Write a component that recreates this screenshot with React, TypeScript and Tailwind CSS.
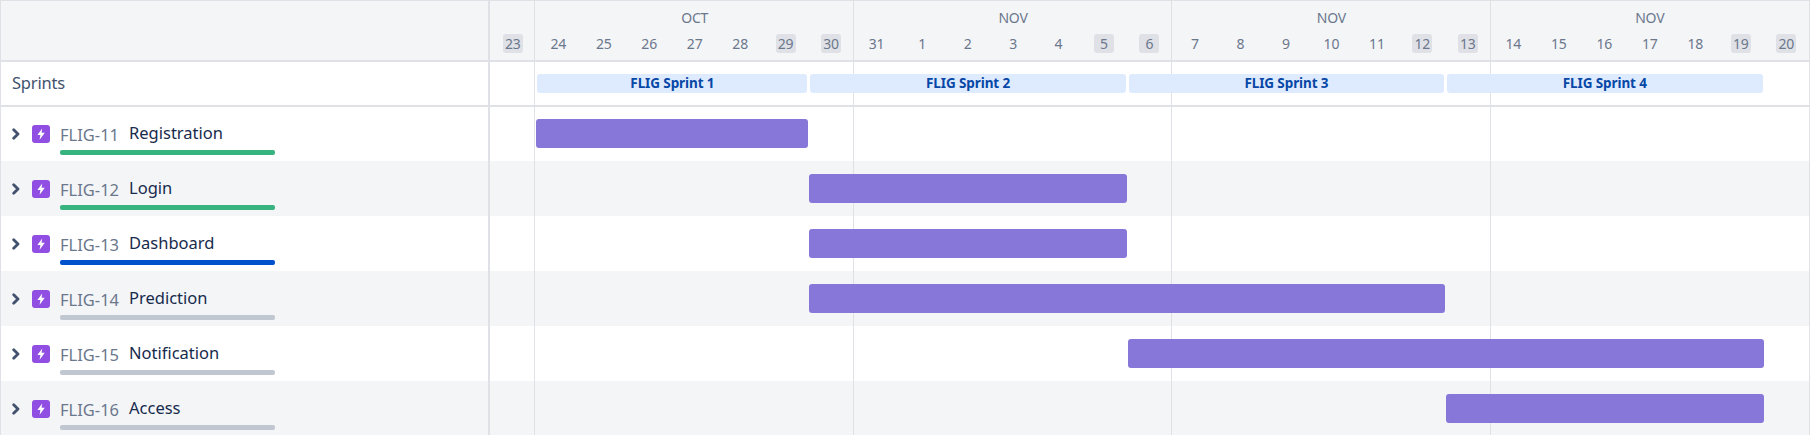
import React from "react";

const days = [23, 24, 25, 26, 27, 28, 29, 30, 31, 1, 2, 3, 4, 5, 6, 7, 8, 9, 10, 11, 12, 13, 14, 15, 16, 17, 18, 19, 20];
const weekends = [23, 29, 30, 5, 6, 12, 13, 19, 20];

const sprints = [
  { name: "FLIG Sprint 1", cls: "col-start-2 col-span-6 ml-[2px] mr-[1px]" },
  { name: "FLIG Sprint 2", cls: "col-start-8 col-span-7 ml-[2px] mr-[1px]" },
  { name: "FLIG Sprint 3", cls: "col-start-15 col-span-7 ml-[2px] mr-[1px]" },
  { name: "FLIG Sprint 4", cls: "col-start-22 col-span-7 ml-[2px] mr-[1px]" },
];

const issues = [
  { id: "FLIG-11", title: "Registration", progress: "bg-[#36b37e]", bar: "col-start-2 col-span-6" },
  { id: "FLIG-12", title: "Login", progress: "bg-[#36b37e]", bar: "col-start-8 col-span-7" },
  { id: "FLIG-13", title: "Dashboard", progress: "bg-[#0052cc]", bar: "col-start-8 col-span-7" },
  { id: "FLIG-14", title: "Prediction", progress: "bg-[#c1c7d0]", bar: "col-start-8 col-span-14" },
  { id: "FLIG-15", title: "Notification", progress: "bg-[#c1c7d0]", bar: "col-start-15 col-span-14" },
  { id: "FLIG-16", title: "Access", progress: "bg-[#c1c7d0]", bar: "col-start-22 col-span-7" },
];

const EpicIcon = () => (
  <div className="w-[18px] h-[18px] rounded-[3px] bg-[#904ee2] flex items-center justify-center shrink-0">
    <svg width="10" height="12" viewBox="0 0 10 12">
      <path d="M6.2.4 1.4 7H4.4L3.6 11.8 8.8 4.8H5.6Z" fill="#fff" />
    </svg>
  </div>
);

const Chevron = () => (
  <svg width="8" height="12" viewBox="0 0 8 12" className="shrink-0">
    <path d="M1.7 1.7 6 6 1.7 10.3" fill="none" stroke="#42526e" strokeWidth="2.8" strokeLinecap="round" strokeLinejoin="round" />
  </svg>
);

const App: React.FC = () => {
  return (
    <div className="w-[1810px] h-[435px] overflow-hidden bg-white border-t border-l border-r border-[#dfe1e6] font-['Noto_Sans',sans-serif] flex">
      {/* left panel */}
      <div className="w-[487px] shrink-0 flex flex-col">
        <div className="h-[61px] shrink-0 bg-[#f4f5f7] border-b-2 border-[#dfe1e6]"></div>
        <div className="h-[45px] shrink-0 border-b-2 border-[#dfe1e6] pl-[11px] flex items-center text-[16.5px] tracking-[-0.2px] text-[#42526e]">Sprints</div>
        {issues.map((issue, i) => (
          <div key={issue.id} className={`shrink-0 pl-[11px] flex items-start ${i === 0 ? "h-[54px] pt-[18px]" : "h-[55px] pt-[19px]"} ${i % 2 === 1 ? "bg-[#f4f5f7]" : "bg-white"}`}>
            <div className="w-[20px] pt-[3px]">
              <Chevron />
            </div>
            <EpicIcon />
            <div className="ml-[10px] w-[215px]">
              <div className="flex items-center h-[18px]">
                <span className="w-[69px] text-[16.5px] text-[#6b778c] mt-[3px]">{issue.id}</span>
                <span className="text-[16.5px] text-[#172b4d] -mt-[1px]">{issue.title}</span>
              </div>
              <div className={`h-[5px] mt-[7px] rounded-[2px] ${issue.progress}`}></div>
            </div>
          </div>
        ))}
      </div>

      {/* timeline */}
      <div className="relative flex-1 border-l-2 border-[#dfe1e6] flex flex-col">
        {/* month separators, under the bars */}
        <div className="absolute inset-0 z-10 -translate-x-[1px] grid grid-cols-[repeat(29,1fr)] pointer-events-none">
          <div className="col-start-2 border-l border-[#dfe1e6]"></div>
          <div className="col-start-9 border-l border-[#dfe1e6]"></div>
          <div className="col-start-16 border-l border-[#dfe1e6]"></div>
          <div className="col-start-23 border-l border-[#dfe1e6]"></div>
        </div>

        <div className="h-[61px] shrink-0 bg-[#f4f5f7] border-b-2 border-[#dfe1e6] flex flex-col">
          <div className="grid grid-cols-[repeat(29,1fr)] h-[33px] items-center text-[14px] tracking-[-0.2px] text-[#6b778c] text-center">
            <div className="col-start-2 col-span-7">OCT</div>
            <div className="col-span-7">NOV</div>
            <div className="col-span-7">NOV</div>
            <div className="col-span-7">NOV</div>
          </div>
          <div className="grid grid-cols-[repeat(29,1fr)] text-[14px] tracking-[-0.2px] text-[#6b778c]">
            {days.map((d) => (
              <div key={d} className="flex justify-center">
                <span className={`w-[20px] h-[19px] rounded-[3px] flex items-center justify-center ${weekends.includes(d) ? "bg-[#dfe1e6]" : ""}`}>{d}</span>
              </div>
            ))}
          </div>
        </div>

        <div className="h-[45px] shrink-0 border-b-2 border-[#dfe1e6] grid grid-cols-[repeat(29,1fr)] items-center">
          {sprints.map((s) => (
            <div key={s.name} className={`relative z-20 h-[19px] rounded-[3px] bg-[#deebff] flex items-center justify-center text-[13.5px] font-bold tracking-[-0.1px] text-[#0747a6] ${s.cls}`}>
              {s.name}
            </div>
          ))}
        </div>

        {issues.map((issue, i) => (
          <div key={issue.id} className={`shrink-0 grid grid-cols-[repeat(29,1fr)] items-center ${i === 0 ? "h-[54px] pb-[1px]" : "h-[55px]"} ${i % 2 === 1 ? "bg-[#f4f5f7]" : "bg-white"}`}>
            <div className={`relative z-20 h-[29px] ml-[1px] rounded-[3px] bg-[#8777d9] ${issue.bar}`}></div>
          </div>
        ))}
      </div>
    </div>
  );
};

export default App;
